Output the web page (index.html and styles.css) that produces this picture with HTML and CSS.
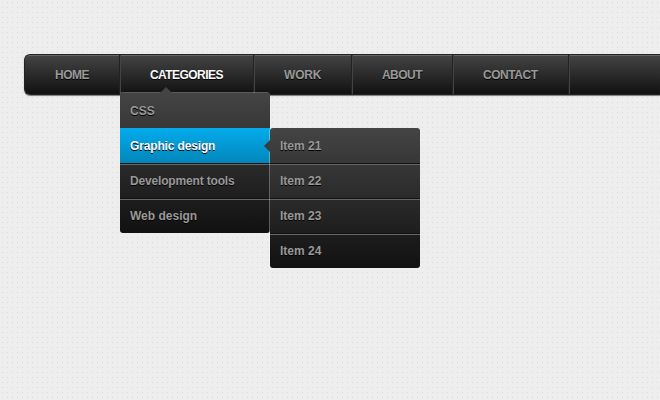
FILE: index.html
```html
<!DOCTYPE html>
<html lang="en">
<head>
<meta charset="utf-8">
<title>Menu</title>
<link rel="stylesheet" href="styles.css">
</head>
<body>
<ul class="menu">
  <li class="item home"><a>HOME</a></li>
  <li class="item categories active"><a>CATEGORIES</a>
    <ul class="sub">
      <li><a class="css">CSS</a></li>
      <li class="active"><a class="graphic">Graphic design</a>
        <ul class="sub side">
          <li><a>Item 21</a></li>
          <li><a>Item 22</a></li>
          <li><a>Item 23</a></li>
          <li><a>Item 24</a></li>
        </ul>
      </li>
      <li><a class="tools">Development tools</a></li>
      <li><a class="web">Web design</a></li>
    </ul>
  </li>
  <li class="item work"><a>WORK</a></li>
  <li class="item about"><a>ABOUT</a></li>
  <li class="item contact"><a>CONTACT</a></li>
</ul>
</body>
</html>
```
FILE: styles.css
```css
html {
  overflow: hidden;
}

body {
  margin: 0;
  padding: 54px 0 0 24px;
  height: 346px;
  overflow: hidden;
  background: #eee radial-gradient(circle at 2.5px 2.5px, #dadada 0.7px, transparent 0.8px) 0 0 / 5px 5px;
  font: bold 12px/15px "Liberation Sans", Arial, sans-serif;
}

ul {
  margin: 0;
  padding: 0;
  list-style: none;
}

.menu {
  display: flex;
  box-sizing: border-box;
  height: 41px;
  border: 1px solid #222;
  border-right: 0;
  border-radius: 6px 0 0 6px;
  background: linear-gradient(#444, #111);
  box-shadow: 0 1px 1px #777, inset 0 1px 0 #666;
}

.item {
  position: relative;
  border-right: 1px solid #222;
  box-shadow: 1px 0 0 #444;
}

a {
  display: block;
  color: #999;
  text-shadow: 0 1px 0 #000;
  white-space: nowrap;
}

.item > a {
  padding: 13px 0 11px 30px;
}

.active > a {
  color: #fafafa;
}

.home { width: 94px; }
.categories { width: 133px; }
.work { width: 97px; }
.about { width: 100px; }
.contact { width: 115px; }

.home > a { letter-spacing: -0.5px; }
.categories > a { letter-spacing: -0.56px; }
.work > a { letter-spacing: -0.2px; }
.about > a { letter-spacing: -0.55px; }
.contact > a { letter-spacing: -0.45px; }

.sub {
  position: absolute;
  z-index: 1;
  top: 38px;
  left: 0;
  width: 150px;
  border-radius: 3px;
  background: linear-gradient(#444, #111);
  box-shadow: 0 -1px 0 rgba(255, 255, 255, 0.3);
  letter-spacing: 0;
}

.sub li {
  position: relative;
  box-shadow: 0 1px 0 #111, 0 2px 0 #666;
}

.sub li:last-child {
  box-shadow: none;
}

.sub a {
  padding: 11px 10px 9px;
}

.sub .graphic { letter-spacing: -0.15px; }
.sub .tools { letter-spacing: -0.17px; }

.sub .active > a {
  background: linear-gradient(#04acec, #0186ba);
}

.side {
  top: 0;
  left: 150px;
  box-shadow: -1px 0 0 rgba(255, 255, 255, 0.3);
}

.sub > li:first-child > a::after {
  content: "";
  position: absolute;
  top: -6px;
  left: 40px;
  border-left: 6px solid transparent;
  border-right: 6px solid transparent;
  border-bottom: 6px solid #444;
}

.side > li:first-child > a::after {
  top: 12px;
  left: -6px;
  border-left: 0;
  border-right: 6px solid #3b3b3b;
  border-top: 6px solid transparent;
  border-bottom: 6px solid transparent;
}
```
